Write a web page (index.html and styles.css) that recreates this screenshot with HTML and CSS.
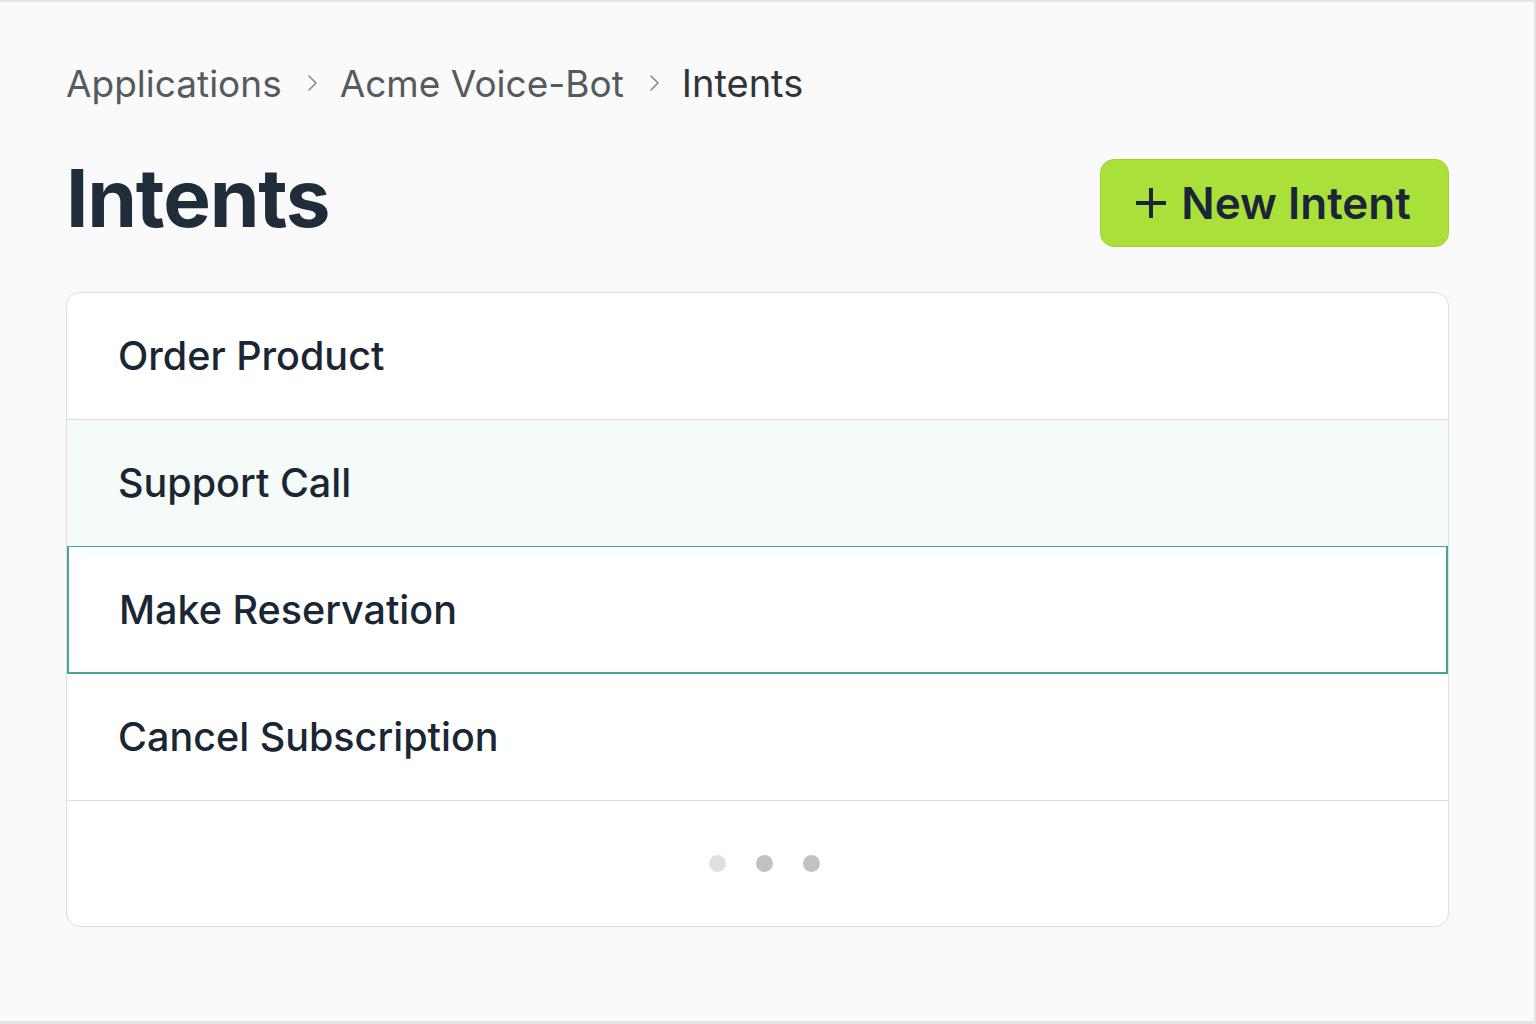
FILE: index.html
```html
<!DOCTYPE html>
<html lang="en">
<head>
<meta charset="utf-8">
<title>Intents</title>
<link rel="stylesheet" href="styles.css">
</head>
<body>
<div class="page">
  <nav class="crumbs">
    <span class="crumb">Applications</span>
    <svg class="sep" viewBox="0 0 12 20" width="12" height="20"><path d="M3 3l7 7-7 7" fill="none" stroke="#8a8a8a" stroke-width="1.6" stroke-linecap="round" stroke-linejoin="round"/></svg>
    <span class="crumb">Acme Voice-Bot</span>
    <svg class="sep" viewBox="0 0 12 20" width="12" height="20"><path d="M3 3l7 7-7 7" fill="none" stroke="#8a8a8a" stroke-width="1.6" stroke-linecap="round" stroke-linejoin="round"/></svg>
    <span class="crumb current">Intents</span>
  </nav>
  <header class="head">
    <h1 class="title">Intents</h1>
    <button class="new-btn">
      <svg class="plus" viewBox="0 0 34 34" width="34" height="34"><path d="M17 2v30M2 17h30" stroke="#1b2537" stroke-width="4" fill="none"/></svg>
      <span>New Intent</span>
    </button>
  </header>
  <div class="card">
    <div class="row">Order Product</div>
    <div class="row hover">Support Call</div>
    <div class="row selected">Make Reservation</div>
    <div class="row">Cancel Subscription</div>
    <div class="footer">
      <span class="dot light"></span>
      <span class="dot"></span>
      <span class="dot"></span>
    </div>
  </div>
</div>
</body>
</html>
```

FILE: styles.css
```css
* { box-sizing: border-box; }
html, body { margin: 0; padding: 0; }
body {
  background: #fafafa;
  font-family: Inter, "Noto Sans", sans-serif;
  width: 1536px;
  height: 1024px;
  overflow: hidden;
}
.page {
  height: 1024px;
  border-top: 2px solid #e4e4e4;
  border-right: 2px solid #e4e4e4;
  border-bottom: 3px solid #e4e4e4;
  padding: 57px 85px 0 66px;
}
.crumbs {
  display: flex;
  align-items: center;
  height: 48px;
  font-size: 37px;
  color: #555a5e;
}
.crumb.current { color: #2f3438; font-size: 38px; }
.sep { margin: 0 22px 0 24px; }
.head {
  display: flex;
  justify-content: space-between;
  align-items: center;
  margin-top: 52px;
  height: 88px;
}
.title {
  margin: 0 0 10px;
  font-size: 80px;
  font-weight: 700;
  color: #1f2d3b;
  letter-spacing: -1.2px;
  line-height: 1;
}
.new-btn {
  width: 349px;
  height: 88px;
  border: 1px solid #9fd42c;
  border-radius: 14px;
  background: #a9e13a;
  color: #1b2537;
  font-family: inherit;
  font-size: 44px;
  font-weight: 600;
  padding: 0 4px 0 0;
  display: flex;
  align-items: center;
  justify-content: center;
  gap: 13px;
}
.plus { display: block; }
.card {
  margin-top: 45px;
  background: #fff;
  border: 1px solid #dedede;
  border-radius: 14px;
  overflow: hidden;
}
.row {
  height: 127px;
  display: flex;
  align-items: center;
  padding-left: 51px;
  font-size: 39.5px;
  font-weight: 500;
  color: #1a2634;
  border-bottom: 1px solid #dedede;
}
.row.hover { background: #f5fbf8; border-bottom-color: #45a59a; }
.row.selected {
  border-left: 2px solid #45a59a;
  border-right: 2px solid #45a59a;
  border-bottom: 2px solid #45a59a;
  padding-left: 50px;
}
.footer {
  height: 125px;
  display: flex;
  justify-content: center;
  align-items: center;
  gap: 30px;
  padding-left: 13px;
}
.dot {
  width: 17px;
  height: 17px;
  border-radius: 50%;
  background: #c2c2c2;
}
.dot.light { background: #e0e0e0; }
```
